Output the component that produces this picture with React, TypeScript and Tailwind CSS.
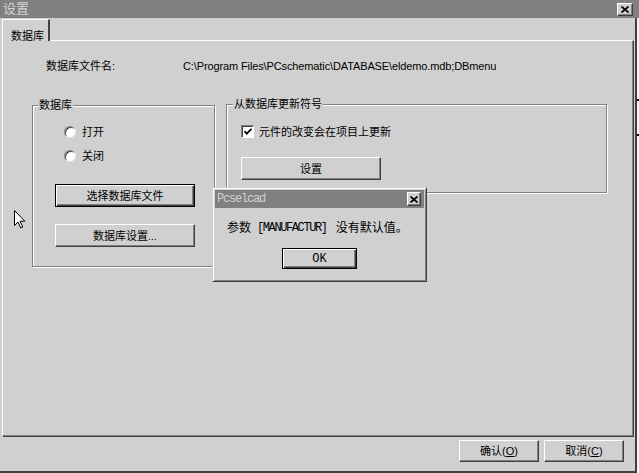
import React from 'react';

const cjk = "font-['Liberation_Sans','Noto_Sans_CJK_SC',sans-serif]";
const mono = "font-['Liberation_Mono','Noto_Sans_CJK_SC',monospace]";

const raised =
  'border border-t-white border-l-white border-r-[#404040] border-b-[#404040] shadow-[inset_-1px_-1px_0_#808080]';
const defaultBtn =
  'border border-black shadow-[inset_1px_1px_0_#fff,inset_-1px_-1px_0_#404040,inset_-2px_-2px_0_#808080]';

const CloseBox: React.FC<{ w: string; h: string }> = ({ w, h }) => (
  <div className={`${w} ${h} bg-[#d0d0d0] ${raised} flex items-center justify-center`}>
    <svg width="8" height="7" viewBox="0 0 8 7">
      <path d="M0.5 0.5L7.5 6.5M7.5 0.5L0.5 6.5" stroke="#000" strokeWidth="1.7" />
    </svg>
  </div>
);

const Radio: React.FC<{ label: string }> = ({ label }) => (
  <div className="flex items-center h-[12px]">
    <span className="w-[12px] h-[12px] rounded-full bg-white border border-t-[#808080] border-l-[#808080] border-r-[#e8e8e8] border-b-[#e8e8e8] shadow-[inset_1px_1px_0_#404040]" />
    <span className="ml-[6px] text-[11px] leading-[12px] text-black">{label}</span>
  </div>
);

const App: React.FC = () => {
  return (
    <div className={`relative w-[639px] h-[473px] overflow-hidden bg-[#ececec] ${cjk}`}>
      {/* title bar */}
      <div className="h-[18px] bg-[#808080] flex items-center justify-between pl-[3px] pr-[6px]">
        <span className="text-[13px] leading-[16px] text-[#d2d2d2]">设置</span>
        <CloseBox w="w-[16px]" h="h-[13px]" />
      </div>

      <div className="flex h-[455px]">
        <div className="w-[637px] h-full bg-[#d0d0d0] border-r-2 border-b-2 border-r-[#404040] border-b-[#404040] flex flex-col pl-[2px] pr-[2px]">
          {/* tab */}
          <div className="flex mt-[1px]">
            <div className="relative z-10 w-[48px] h-[22px] -mb-[1px] bg-[#d0d0d0] border-t border-l border-t-white border-l-white border-r-2 border-r-[#404040] pl-[8px] pt-[3px]">
              <span className="text-[11px] leading-[12px] text-black">数据库</span>
            </div>
          </div>

          {/* panel */}
          <div className="h-[396px] border border-t-white border-l-white border-r-[#808080] border-b-[#808080] shadow-[1px_1px_0_#404040]">
            <div className="flex items-center mt-[19px] ml-[43px] h-[12px] text-[11px] leading-[12px] text-black">
              <span className="w-[137px]">数据库文件名:</span>
              <span className="tracking-[-0.12px]">C:\Program Files\PCschematic\DATABASE\eldemo.mdb;DBmenu</span>
            </div>

            <div className="flex items-start ml-[29px] mt-[26px] gap-[11px]">
              <fieldset className="mt-[1px] w-[183px] border border-[#808080] shadow-[inset_1px_1px_0_#fff,1px_1px_0_#fff] pb-[19px]">
                <legend className="ml-[5px] px-[1px] bg-[#d0d0d0] text-[11px] leading-[12px] text-black">数据库</legend>
                <div className="ml-[31px] mt-[15px] flex flex-col gap-[12px]">
                  <Radio label="打开" />
                  <Radio label="关闭" />
                </div>
                <button className={`block ml-[22px] mt-[22px] w-[140px] h-[23px] bg-[#d0d0d0] ${defaultBtn} text-[11px] leading-[12px] text-black`}>
                  选择数据库文件
                </button>
                <button className={`block ml-[22px] mt-[17px] w-[140px] h-[23px] bg-[#d0d0d0] ${raised} text-[11px] leading-[12px] text-black`}>
                  数据库设置...
                </button>
              </fieldset>

              <fieldset className="w-[381px] border border-[#808080] shadow-[inset_1px_1px_0_#fff,1px_1px_0_#fff] pb-[12px]">
                <legend className="ml-[6px] px-[1px] bg-[#d0d0d0] text-[11px] leading-[12px] text-black">从数据库更新符号</legend>
                <div className="ml-[14px] mt-[15px] flex items-center h-[13px]">
                  <span className="w-[13px] h-[13px] bg-white border border-t-[#808080] border-l-[#808080] border-r-white border-b-white shadow-[inset_1px_1px_0_#404040] flex items-center justify-center">
                    <svg width="8" height="7" viewBox="0 0 8 7">
                      <path d="M0.5 3.2L2.8 5.6L7.5 0.8" stroke="#000" strokeWidth="1.8" fill="none" />
                    </svg>
                  </span>
                  <span className="ml-[5px] text-[11px] leading-[12px] text-black">元件的改变会在项目上更新</span>
                </div>
                <button className={`block ml-[14px] mt-[19px] w-[140px] h-[23px] bg-[#d0d0d0] ${raised} text-[11px] leading-[12px] text-black`}>
                  设置
                </button>
              </fieldset>
            </div>
          </div>

          {/* footer */}
          <div className="flex justify-end gap-[5px] mt-[4px] pr-[9px]">
            <button className={`w-[80px] h-[22px] bg-[#d0d0d0] ${raised} text-[11px] leading-[12px] text-black`}>
              确认(<u>O</u>)
            </button>
            <button className={`w-[80px] h-[22px] bg-[#d0d0d0] ${raised} text-[11px] leading-[12px] text-black`}>
              取消(<u>C</u>)
            </button>
          </div>
        </div>

        {/* desktop edge */}
        <div className="flex-1 flex flex-col items-end bg-[#f2f2f2]">
          <span className="mt-[81px] w-[2px] h-[2px] bg-black" />
          <span className="mt-[33px] w-[2px] h-[2px] bg-black" />
        </div>
      </div>

      {/* message box */}
      <div className="absolute left-[212px] top-[187px] w-[215px] h-[95px] bg-[#d0d0d0] border border-t-[#d0d0d0] border-l-[#d0d0d0] border-r-[#404040] border-b-[#404040] shadow-[inset_1px_1px_0_#fff,inset_-1px_-1px_0_#808080] p-[2px] flex flex-col">
        <div className="h-[18px] bg-[#808080] flex items-center justify-between pl-[2px] pr-[3px]">
          <span className={`${mono} text-[12px] tracking-[-1.2px] leading-[14px] text-[#d2d2d2]`}>Pcselcad</span>
          <CloseBox w="w-[14px]" h="h-[14px]" />
        </div>
        <div className="mt-[13px] pl-[12px] h-[14px] flex items-center text-black whitespace-nowrap">
          <span className="text-[12px] leading-[14px]">参数</span>
          <span className={`${mono} text-[12px] tracking-[-1.4px] leading-[14px] ml-[6px]`}>[MANUFACTUR]</span>
          <span className="text-[12px] leading-[14px] ml-[9px]">没有默认值。</span>
        </div>
        <div className="flex justify-center mt-[13px]">
          <button className={`w-[75px] h-[21px] bg-[#d0d0d0] ${defaultBtn} ${mono} text-[12px] leading-[14px] text-black`}>
            OK
          </button>
        </div>
      </div>

      {/* mouse pointer */}
      <svg className="absolute left-[14px] top-[210px]" width="12" height="19" viewBox="0 0 12 19">
        <path d="M0.5 0.5L0.5 15.5L4 12L6.8 18L8.8 17L6 11.2L10.8 11.2Z" fill="#fff" stroke="#000" strokeWidth="1" />
      </svg>
    </div>
  );
};

export default App;
